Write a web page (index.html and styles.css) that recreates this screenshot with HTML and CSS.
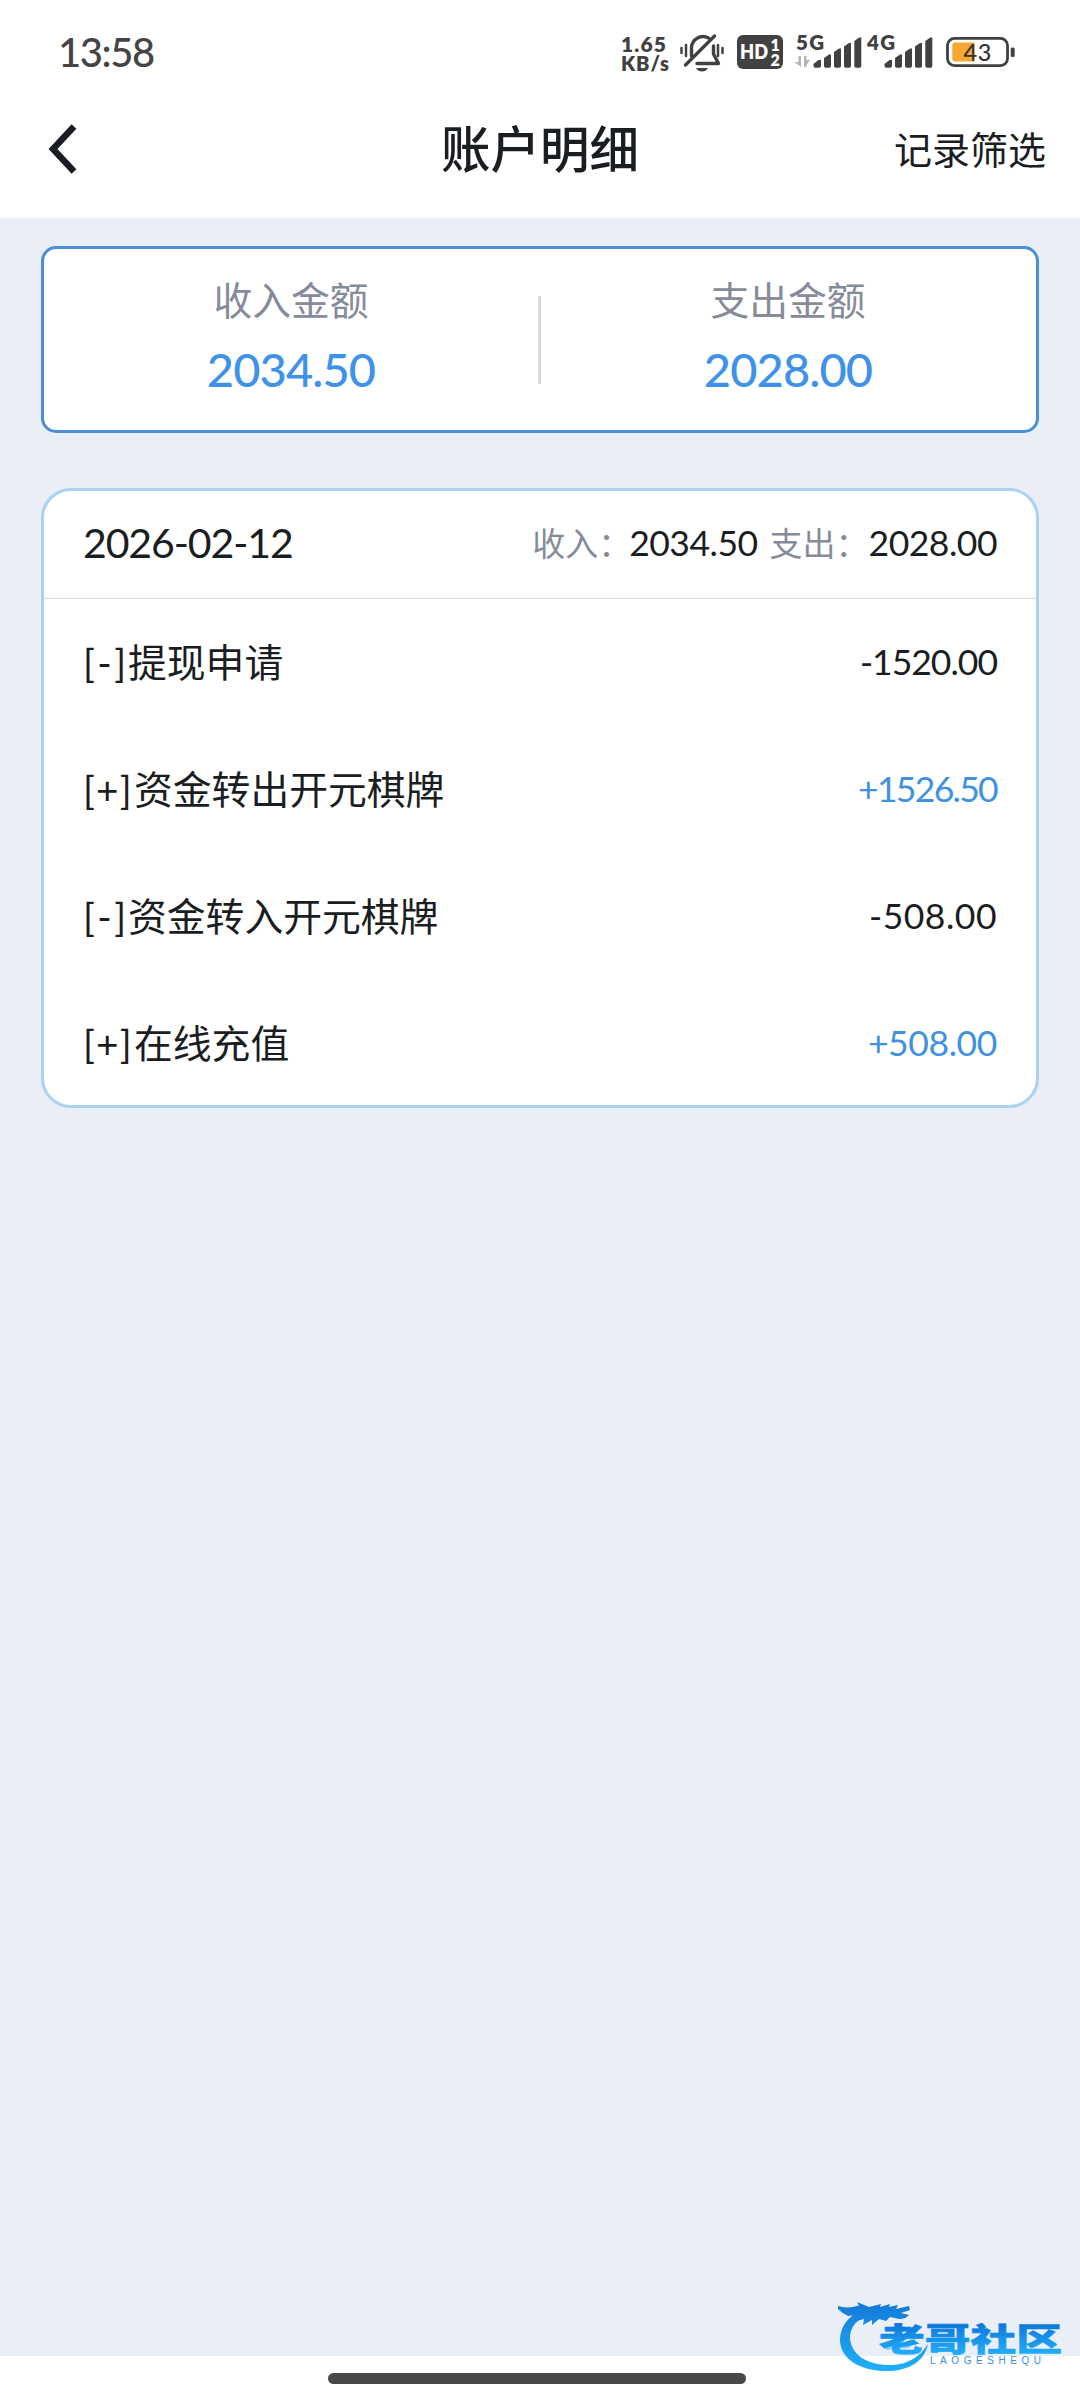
FILE: index.html
```html
<!DOCTYPE html>
<html lang="zh-CN">
<head>
<meta charset="utf-8">
<title>账户明细</title>
<link rel="stylesheet" href="styles.css">
</head>
<body>
<div class="screen">
  <div class="statusbar">
    <span class="clock">13:58</span>
    <svg class="status-icons" width="400" height="60" viewBox="620 24 400 60">
      <g fill="#414141" font-family="Lato, sans-serif" font-weight="800">
        <text x="621" y="52" font-size="21" textLength="45">1.65</text>
        <text x="621" y="71" font-size="20" textLength="48">KB/s</text>
        <text x="796" y="50" font-size="20.500" textLength="28">5G</text>
        <text x="867" y="50" font-size="20.500" textLength="28">4G</text>
      </g>
      <g fill="none" stroke="#414141" stroke-width="3.400" stroke-linecap="round" stroke-linejoin="round">
        <path d="M691.500 56V48a11.500 11.500 0 0 1 17-10"/>
        <path d="M713.500 46v8l5 9.500H697"/>
        <path d="M685.500 65 714.500 36"/>
        <path d="M681.500 48v5M686 45v11M718 45v11M722.500 48v5" stroke-width="2.500"/>
      </g>
      <path d="M696 68h12q-2 3.500-6 3.500t-6-3.500z" fill="#414141"/>
      <rect x="737" y="35" width="46" height="34" rx="6" fill="#414141"/>
      <g fill="#fff" font-family="Lato, sans-serif" font-weight="800">
        <text x="740" y="59" font-size="20" textLength="28" lengthAdjust="spacingAndGlyphs">HD</text>
        <text x="770.500" y="51" font-size="16">1</text>
        <text x="770.500" y="65.500" font-size="16">2</text>
      </g>
      <path d="M798.500 56h2.500v11l-6.500-5h4zM804 67V56h2.500v4h3.500l-3.500 5v2z" fill="#b5b5b5"/>
      <g fill="#414141">
        <path d="M813.500 66v-2l5-4h2.500v6q0 1.700-1.700 1.700h-4q-1.800 0-1.800-1.700z"/>
        <path d="M824 66v-8l5-3.500h2V66q0 1.700-1.700 1.700h-3.600Q824 67.700 824 66z"/>
        <path d="M834 66V52l5-3.500h2V66q0 1.700-1.700 1.700h-3.600Q834 67.700 834 66z"/>
        <path d="M844 66V46.500l5-3.500h2v23q0 1.700-1.700 1.700h-3.600Q844 67.700 844 66z"/>
        <path d="M854.300 66V41l5-3.500h2V66q0 1.700-1.700 1.700H856q-1.700 0-1.700-1.700z"/>
        <path d="M884.500 66v-2l5-4h2.500v6q0 1.700-1.700 1.700h-4q-1.800 0-1.800-1.700z"/>
        <path d="M895 66v-8l5-3.500h2V66q0 1.700-1.700 1.700h-3.600Q895 67.700 895 66z"/>
        <path d="M905 66V52l5-3.500h2V66q0 1.700-1.700 1.700h-3.600Q905 67.700 905 66z"/>
        <path d="M915 66V46.500l5-3.500h2v23q0 1.700-1.700 1.700h-3.600Q915 67.700 915 66z"/>
        <path d="M925.300 66V41l5-3.500h2V66q0 1.700-1.700 1.700H927q-1.700 0-1.700-1.700z"/>
        <rect x="1010.700" y="47.500" width="4" height="9.500" rx="1.500"/>
      </g>
      <rect x="947.500" y="38.400" width="60" height="27.200" rx="7" fill="none" stroke="#414141" stroke-width="2.800"/>
      <path d="M955 42.500h19.500v19H955q-2.700 0-2.700-2.700V45.200q0-2.700 2.700-2.700z" fill="#f5a834"/>
      <text x="963.500" y="61" font-family="Lato, sans-serif" font-size="23.500" font-weight="500" textLength="28" fill="#37322b">43</text>
    </svg>
  </div>

  <header class="navbar">
    <svg class="back" width="30" height="52" viewBox="0 0 30 52"><path d="M27 3.500 6 26l21 22.500" fill="none" stroke="#1a1d22" stroke-width="6.500"/></svg>
    <h1 class="title">账户明细</h1>
    <span class="filter">记录筛选</span>
  </header>

  <main class="content">
    <section class="totals">
      <div class="total">
        <span class="total-label">收入金额</span>
        <span class="total-value">2034.50</span>
      </div>
      <i class="separator"></i>
      <div class="total">
        <span class="total-label">支出金额</span>
        <span class="total-value">2028.00</span>
      </div>
    </section>

    <section class="day">
      <div class="day-head">
        <span class="date">2026-02-12</span>
        <div class="day-sum">
          <span class="sum-label">收入：</span><span class="sum-value">2034.50</span>
          <span class="sum-label second">支出：</span><span class="sum-value">2028.00</span>
        </div>
      </div>
      <div class="row"><span class="name"><span class="sign minus">[-]</span>提现申请</span><span class="amount tight">-1520.00</span></div>
      <div class="row"><span class="name"><span class="sign plus">[+]</span>资金转出开元棋牌</span><span class="amount in tighter">+1526.50</span></div>
      <div class="row"><span class="name"><span class="sign minus">[-]</span>资金转入开元棋牌</span><span class="amount wide">-508.00</span></div>
      <div class="row"><span class="name"><span class="sign plus">[+]</span>在线充值</span><span class="amount in">+508.00</span></div>
    </section>
  </main>

  <footer class="gesture"><i class="home"></i></footer>

  <svg class="brand" width="232" height="80" viewBox="834 2296 232 80">
    <defs>
      <linearGradient id="blue" x1="0" y1="2305" x2="0" y2="2370" gradientUnits="userSpaceOnUse">
        <stop offset="0" stop-color="#147bd8"/><stop offset="1" stop-color="#1fb0fa"/>
      </linearGradient>
      <linearGradient id="word" x1="0" y1="2324" x2="0" y2="2354" gradientUnits="userSpaceOnUse">
        <stop offset="0" stop-color="#0c78dc"/><stop offset="1" stop-color="#22adf8"/>
      </linearGradient>
    </defs>
    <path d="M868 2308C848 2314 840 2327 840 2341C841 2360 862 2372 890 2371C911 2370 925 2360 928 2344C920 2357 908 2364 893 2365C868 2366 851 2355 850 2338C850 2325 860 2316 877 2312z" fill="url(#blue)"/>
    <path d="M838 2306q9 3 21-.5l-2-3.500 12 5 12-3-1 3 10-3-1 3 9-2-2 4 13-3 1 4-9 3 8 2q-3 4-10 4l-9-2-4 4-7-2-7 6v-5l-9 5 1-6-7 2 1-6-10 1q-6-3-10-7z" fill="url(#blue)"/>
    <path d="M880 2345q16-2 28-14l-5 12 16-8-10 13-22 2z" fill="#35aaf2" opacity=".45"/>
    <text x="879" y="2351" font-family="'Noto Sans CJK SC', sans-serif" font-size="32" font-weight="900" textLength="183" lengthAdjust="spacingAndGlyphs" fill="url(#word)" stroke="url(#word)" stroke-width=".6">老哥社区</text>
    <text x="930" y="2364" font-family="'Liberation Sans', sans-serif" font-size="10" textLength="111" fill="#3a8fda">LAOGESHEQU</text>
  </svg>
</div>
</body>
</html>
```
FILE: styles.css
```css
* { box-sizing: border-box; }

body {
  margin: 0;
  font-family: Lato, "Noto Sans CJK SC", sans-serif;
  color: #1a1d21;
  background: #fff;
}

.screen {
  position: relative;
  display: flex;
  flex-direction: column;
  width: 1080px;
  height: 2400px;
  overflow: hidden;
}

.statusbar {
  display: flex;
  justify-content: space-between;
  align-items: center;
  height: 108px;
  padding: 0 60px 0 58px;
}

.clock {
  padding-bottom: 4px;
  font-size: 40px;
  font-weight: 500;
  line-height: 100px;
  letter-spacing: -1.4px;
  color: #444;
}

.navbar {
  display: grid;
  grid-template-columns: 1fr auto 1fr;
  align-items: center;
  height: 110px;
  padding: 0 34px 28px;
}

.back {
  display: block;
  margin-left: 13px;
}

.title {
  margin: 0;
  font-size: 49.500px;
  font-weight: 500;
  line-height: 80px;
}

.filter {
  justify-self: end;
  font-size: 38px;
  line-height: 78px;
}

.content {
  flex: 1;
  padding: 28px 41px 0;
  background: #e9eef7;
}

.totals {
  display: flex;
  align-items: center;
  height: 187px;
  padding-right: 1px;
  border: 3px solid #4a90d9;
  border-radius: 15px;
  background: #fff;
}

.total {
  flex: 1;
  display: flex;
  flex-direction: column;
  align-items: center;
  padding-bottom: 11px;
}

.total-label {
  font-size: 38.800px;
  line-height: 60px;
  color: #858b99;
}

.total-value {
  margin-top: 9px;
  font-size: 47px;
  font-weight: 500;
  line-height: 60px;
  letter-spacing: -.9px;
  color: #3e92ea;
}

.separator {
  width: 3px;
  height: 88px;
  background: #d8dadd;
}

.day {
  margin-top: 55px;
  height: 620px;
  border: 3px solid #aad3f3;
  border-radius: 30px;
  background: #fff;
}

.day-head {
  display: flex;
  justify-content: space-between;
  align-items: center;
  height: 108px;
  padding: 0 39px 3px;
  border-bottom: 1px solid #dadde0;
}

.date {
  font-size: 41px;
  line-height: 100px;
  letter-spacing: -1.100px;
}

.day-sum {
  display: flex;
  align-items: center;
  line-height: 98px;
}

.sum-label {
  font-size: 33px;
  color: #858b99;
}

.sum-label:first-child { margin-right: -2px; }
.sum-label.second { margin-left: 12px; }

.sum-value {
  font-size: 35.500px;
  letter-spacing: -.5px;
}

.row {
  display: flex;
  justify-content: space-between;
  align-items: center;
  height: 127px;
  padding: 0 39px 2px;
}

.name {
  display: flex;
  font-size: 38.800px;
  line-height: 80px;
}

.sign.minus {
  width: 45px;
  letter-spacing: 2.500px;
}

.sign.plus {
  width: 51px;
  letter-spacing: 1.200px;
}

.amount {
  font-size: 35.500px;
  line-height: 80px;
  letter-spacing: -.4px;
}

.amount.wide { letter-spacing: .5px; }
.amount.tight { letter-spacing: -1px; }
.amount.tighter { letter-spacing: -1.700px; }

.amount.in { color: #4091e0; }

.gesture {
  display: flex;
  justify-content: center;
  height: 44px;
  padding: 17px 6px 0 0;
  background: #fff;
}

.home {
  width: 418px;
  height: 11px;
  border-radius: 6px;
  background: #484848;
}

.brand {
  position: absolute;
  left: 834px;
  top: 2296px;
}
```
